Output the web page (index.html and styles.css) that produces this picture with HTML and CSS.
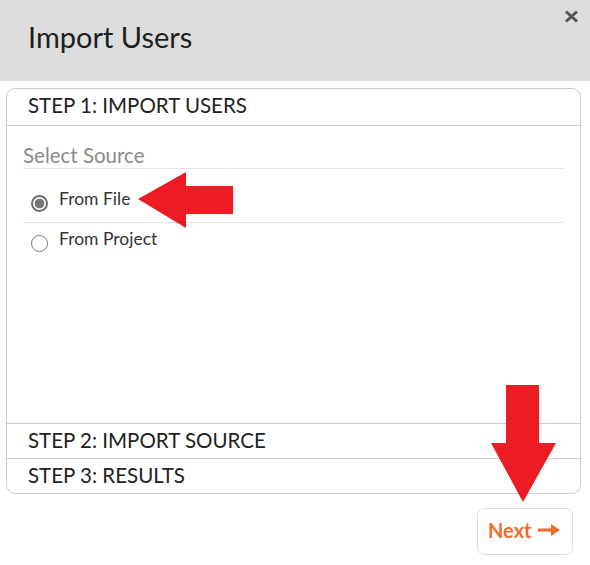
FILE: index.html
```html
<!DOCTYPE html>
<html>
<head>
	<link rel="stylesheet" href="styles.css">
</head>
<body>
	<div class="modal">
		<div class="modal-header">
			<h1>Import Users</h1>
			<span class="close">
				<svg width="15" height="13" viewBox="0 0 15 13"><path d="M2 1.5 L13 11.5 M13 1.5 L2 11.5" stroke="#555" stroke-width="3" stroke-linecap="butt"/></svg>
			</span>
		</div>
		<div class="modal-body">
			<div class="steps">
				<div class="step">
					<div class="step-title first">STEP 1: IMPORT USERS</div>
					<div class="step-body">
						<div class="legend">Select Source</div>
						<div class="options">
							<label class="option divided">
								<span class="radio checked"></span>
								<span>From File</span>
							</label>
							<label class="option">
								<span class="radio"></span>
								<span>From Project</span>
							</label>
						</div>
					</div>
				</div>
				<div class="step">
					<div class="step-title">STEP 2: IMPORT SOURCE</div>
				</div>
				<div class="step">
					<div class="step-title">STEP 3: RESULTS</div>
				</div>
			</div>
			<div class="actions">
				<button class="next">Next
					<svg width="22" height="12" viewBox="0 0 22 12"><path d="M0 4.5 H13 V0 L22 6 L13 12 V7.5 H0 Z" fill="#f26a2a"/></svg>
				</button>
			</div>
		</div>

		<svg class="arrow arrow-left" width="96" height="57" viewBox="0 0 96 57"><polygon points="0,27 48,0 48,14 95,14 95,42 48,42 48,56" fill="#ed1c24"/></svg>
		<svg class="arrow arrow-down" width="66" height="118" viewBox="0 0 66 118"><polygon points="15,0 48,0 48,58 65,58 32,117 0,58 15,58" fill="#ed1c24"/></svg>
	</div>
</body>
</html>
```

FILE: styles.css
```css
html, body {
	margin: 0;
	padding: 0;
	background-color: #fff;
	color: #222;
	font-family: Lato, "Liberation Sans", sans-serif;
}
.modal {
	position: relative;
	width: 590px;
	height: 565px;
}
.modal-header {
	display: flex;
	justify-content: space-between;
	align-items: flex-start;
	height: 81px;
	box-sizing: border-box;
	padding: 20px 11px 0 28px;
	background-color: #ddd;
}
h1 {
	margin: 0;
	font-size: 29px;
	line-height: 34px;
	font-weight: normal;
	color: #1e1e1e;
}
.close {
	display: block;
	margin-top: -10px;
}
.close svg {
	display: block;
}
.modal-body {
	padding: 7px 9px 0 6px;
}
.steps {
	border: 1px solid #ccc;
	border-radius: 9px;
	overflow: hidden;
}
.step + .step {
	border-top: 1px solid #ccc;
}
.step-title {
	padding: 4px 21px 6px;
	font-size: 20.5px;
	line-height: 24px;
}
.step-title.first {
	padding-bottom: 8px;
	border-bottom: 1px solid #ccc;
}
.step-body {
	height: 297px;
	box-sizing: border-box;
	padding: 17px 16px 0;
}
.legend {
	padding-bottom: 1px;
	border-bottom: 1px solid #e3e3e3;
	font-size: 20.5px;
	line-height: 24px;
	color: #8a8a8a;
}
.options {
	margin-top: 14px;
}
.option {
	display: flex;
	align-items: flex-start;
	gap: 11px;
	padding: 5px 0 10px 8px;
	font-size: 17.5px;
	line-height: 22px;
	color: #333;
}
.option.divided {
	border-bottom: 1px solid #e3e3e3;
}
.radio {
	flex: none;
	width: 17px;
	height: 17px;
	margin-top: 7px;
	box-sizing: border-box;
	border: 1.5px solid #777;
	border-radius: 50%;
	background-color: #fff;
}
.radio.checked {
	border: 2px solid #6f6f6f;
	background: radial-gradient(circle, #777 0 4.6px, #fff 5.2px);
}
.actions {
	display: flex;
	justify-content: flex-end;
	padding: 14px 8px 0 0;
}
.next {
	display: flex;
	align-items: center;
	gap: 6px;
	width: 96px;
	height: 47px;
	padding: 0 0 3px 10px;
	border: 1px solid #ddd;
	border-radius: 7px;
	background-color: #fff;
	font-family: Lato, "Liberation Sans", sans-serif;
	font-size: 20px;
	font-weight: bold;
	color: #f26a2a;
}
.arrow {
	position: absolute;
}
.arrow-left {
	left: 138px;
	top: 172px;
}
.arrow-down {
	left: 491px;
	top: 385px;
}
```
